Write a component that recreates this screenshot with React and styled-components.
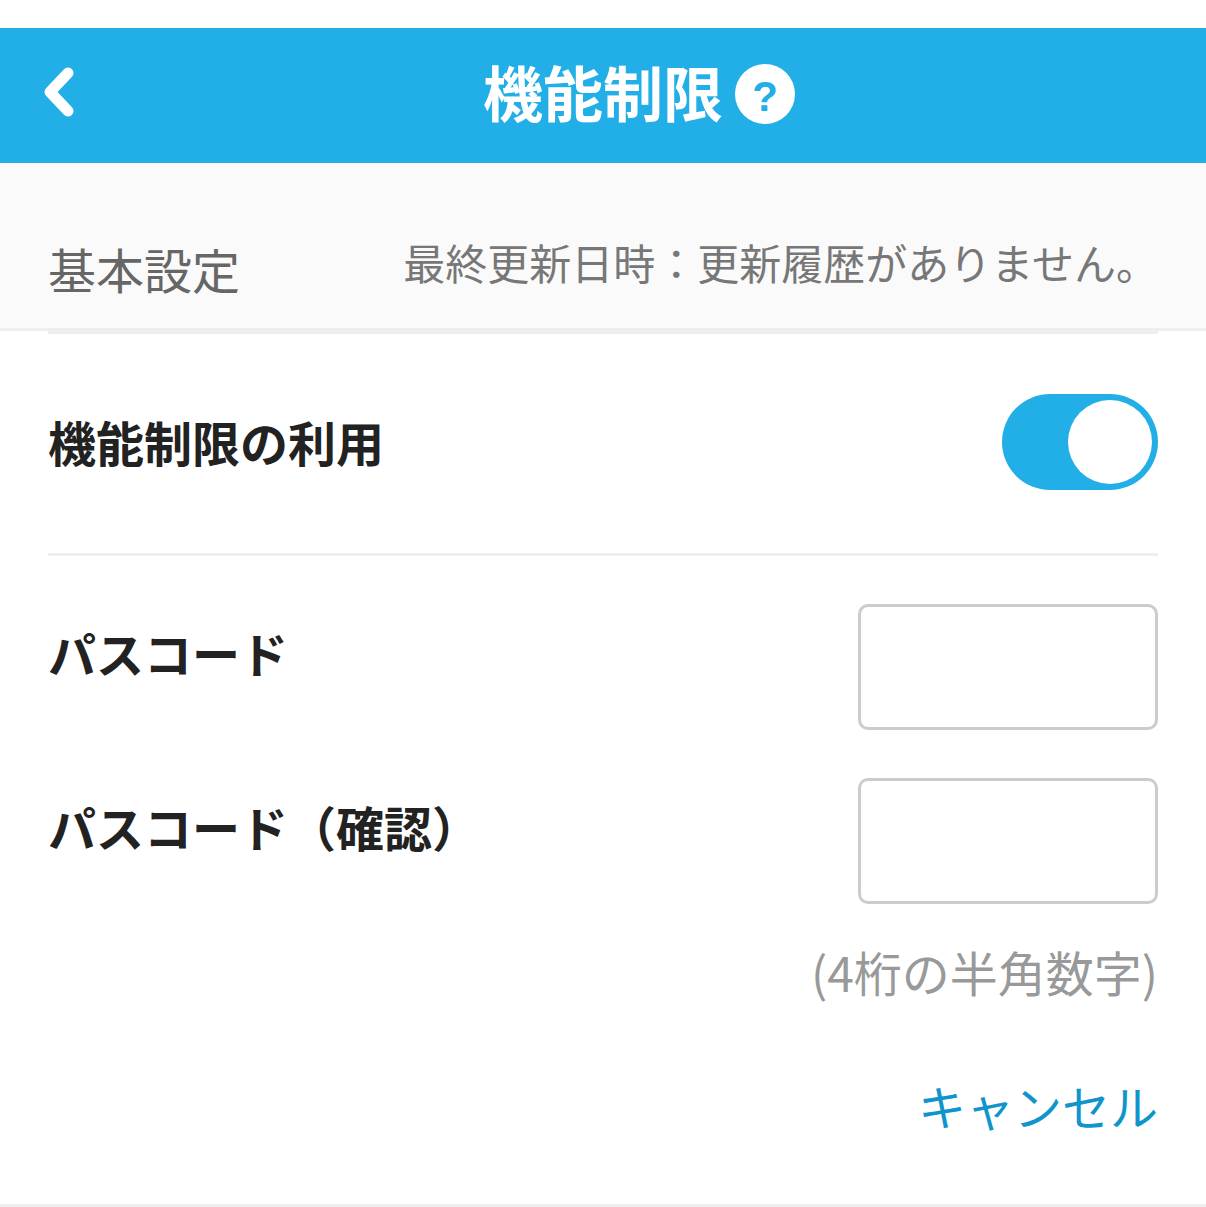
import React from "react";
import styled, { createGlobalStyle } from "styled-components";

const GlobalStyle = createGlobalStyle`
  html, body {
    margin: 0;
    padding: 0;
    background: #fff;
  }
  body {
    font-family: "Noto Sans CJK JP", "Noto Sans", sans-serif;
  }
`;

const Page = styled.div`
  width: 1206px;
  height: 1207px;
  padding-top: 28px;
  box-sizing: border-box;
  overflow: hidden;
  display: flex;
  flex-direction: column;
`;

const Header = styled.header`
  height: 135px;
  flex: none;
  background: #22aee6;
  display: flex;
  align-items: center;
  justify-content: center;
  position: relative;
`;

const BackButton = styled.div`
  position: absolute;
  left: 42px;
  top: 39px;
  width: 36px;
  height: 50px;
`;

const Title = styled.h1`
  margin: 0 0 10px;
  font-size: 60px;
  line-height: 70px;
  font-weight: 700;
  color: #fff;
  position: relative;
`;

const HelpBadge = styled.span`
  position: absolute;
  left: calc(100% + 12px);
  top: 8px;
  width: 60px;
  height: 60px;
  border-radius: 50%;
  background: #fff;
  color: #22aee6;
  font-family: "Liberation Sans", sans-serif;
  font-size: 42px;
  font-weight: 700;
  line-height: 66px;
  text-align: center;
`;

const SectionHead = styled.div`
  height: 165px;
  flex: none;
  background: #fafafa;
  border-bottom: 3px solid #eeeeee;
  padding: 0 48px;
  display: flex;
  justify-content: space-between;
  align-items: flex-end;
`;

const SectionTitle = styled.div`
  font-size: 48px;
  line-height: 70px;
  color: #666;
  margin-bottom: 25px;
`;

const Updated = styled.div`
  font-size: 42px;
  line-height: 60px;
  color: #777;
  margin-bottom: 36px;
`;

const Body = styled.div`
  margin: -3px 48px 0;
  border-top: 6px solid #eeeeee;
`;

const ToggleRow = styled.div`
  height: 219px;
  border-bottom: 3px solid #eeeeee;
  display: flex;
  justify-content: space-between;
  align-items: flex-start;
`;

const Label = styled.div`
  font-size: 48px;
  line-height: 70px;
  font-weight: 700;
  color: #222;
  margin-top: ${(p) => p.$top}px;
`;

const Toggle = styled.div`
  width: 156px;
  height: 96px;
  margin-top: 60px;
  border-radius: 48px;
  background: #22aee6;
  padding: 6px;
  box-sizing: border-box;
  display: flex;
  justify-content: flex-end;
`;

const Knob = styled.div`
  width: 84px;
  height: 84px;
  border-radius: 50%;
  background: #fff;
`;

const Fields = styled.div`
  padding-top: 48px;
  display: flex;
  flex-direction: column;
  gap: 48px;
`;

const FieldRow = styled.div`
  display: flex;
  justify-content: space-between;
  align-items: flex-start;
`;

const Input = styled.input`
  width: 300px;
  height: 126px;
  box-sizing: border-box;
  border: 3px solid #cccccc;
  border-radius: 10px;
  background: #fff;
  padding: 0;
  outline: none;
`;

const Hint = styled.div`
  font-size: 48px;
  line-height: 70px;
  color: #999;
  text-align: right;
  margin-top: 32px;
`;

const Cancel = styled.a`
  display: block;
  font-size: 48px;
  line-height: 70px;
  color: #0f94cc;
  text-align: right;
  margin-top: 64px;
`;

const Footer = styled.div`
  margin-top: auto;
  height: 3px;
  background: #eeeeee;
  flex: none;
`;

export default function App() {
  return (
    <Page>
      <GlobalStyle />
      <Header>
        <BackButton>
          <svg width="36" height="50" viewBox="0 0 36 50" fill="none">
            <path d="M26 6 L8 25 L26 44" stroke="#fff" strokeWidth="11" strokeLinecap="round" strokeLinejoin="round" />
          </svg>
        </BackButton>
        <Title>
          機能制限
          <HelpBadge>?</HelpBadge>
        </Title>
      </Header>
      <SectionHead>
        <SectionTitle>基本設定</SectionTitle>
        <Updated>最終更新日時：更新履歴がありません。</Updated>
      </SectionHead>
      <Body>
        <ToggleRow>
          <Label $top={72}>機能制限の利用</Label>
          <Toggle>
            <Knob />
          </Toggle>
        </ToggleRow>
        <Fields>
          <FieldRow>
            <Label $top={13}>パスコード</Label>
            <Input type="text" />
          </FieldRow>
          <FieldRow>
            <Label $top={13}>パスコード（確認）</Label>
            <Input type="text" />
          </FieldRow>
        </Fields>
        <Hint>(4桁の半角数字)</Hint>
        <Cancel>キャンセル</Cancel>
      </Body>
      <Footer />
    </Page>
  );
}
